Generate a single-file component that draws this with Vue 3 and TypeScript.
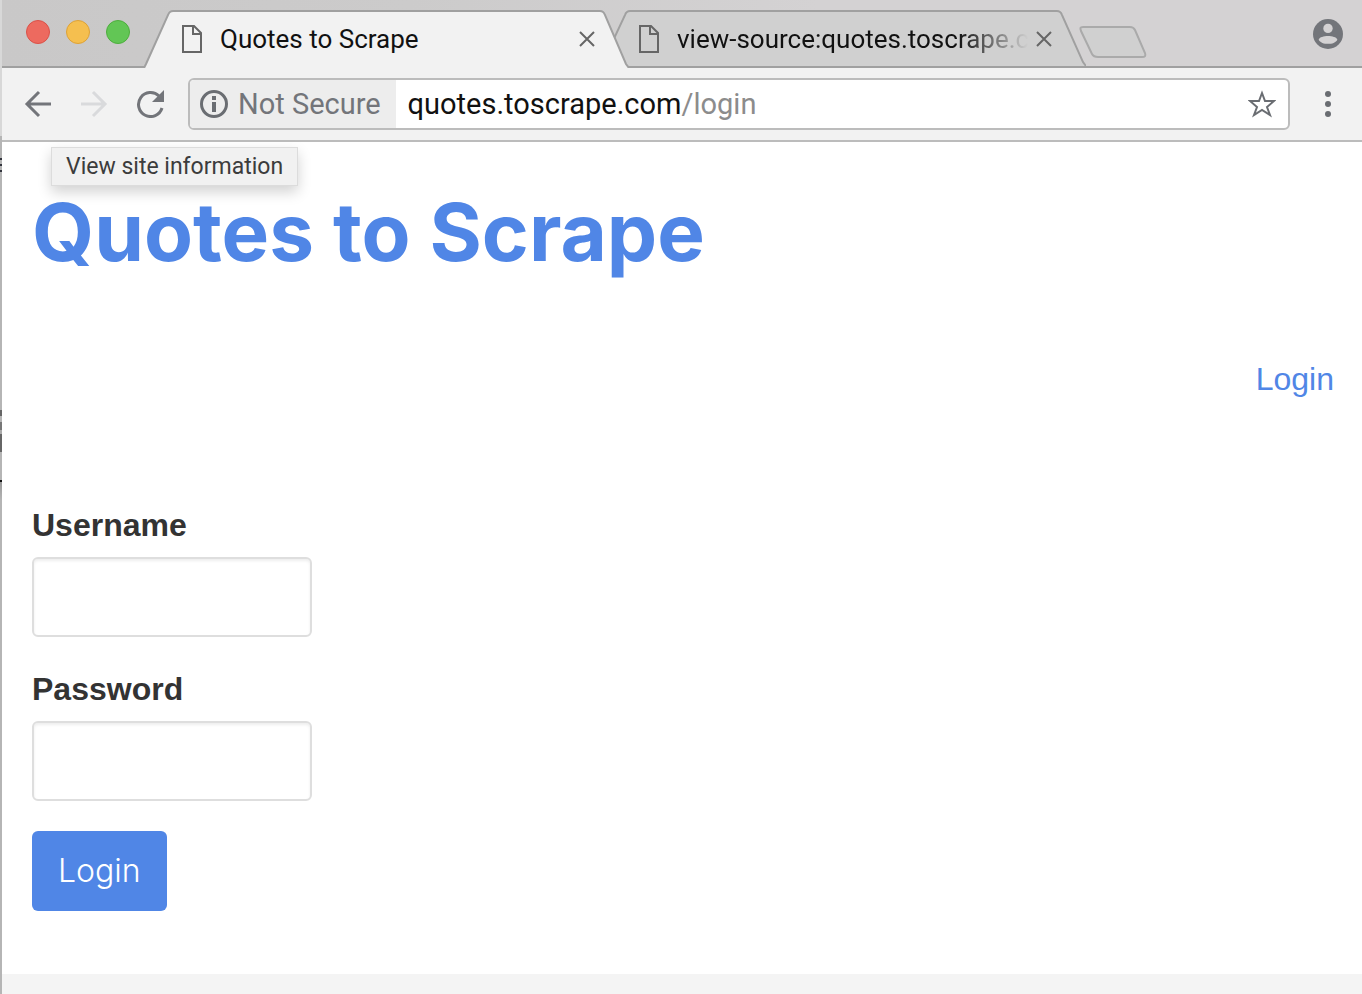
<script setup lang="ts">
import { ref } from 'vue'

interface Tab {
  title: string
  active: boolean
}

const tabs = ref<Tab[]>([
  { title: 'Quotes to Scrape', active: true },
  { title: 'view-source:quotes.toscrape.c', active: false },
])
const username = ref('')
const password = ref('')
const lights = ['red', 'yellow', 'green']
</script>

<template>
  <div class="window">
    <header class="titlebar">
      <div class="lights">
        <button v-for="c in lights" :key="c" type="button" class="light" :class="c" :aria-label="c"></button>
      </div>
      <div class="tabs">
        <div v-for="t in tabs" :key="t.title" class="tab" :class="{ active: t.active }">
          <svg class="shape" viewBox="0 0 484 58" preserveAspectRatio="none" aria-hidden="true">
            <path d="M0 58L2 54L24 5C25 2 26 1 29 1H455C458 1 459 2 460 5L481 54L484 58" />
          </svg>
          <svg class="page-icon" viewBox="0 0 20 28" aria-hidden="true">
            <path d="M1 1H12L19 8V27H1ZM11 1V9H19" />
          </svg>
          <span class="tab-title">{{ t.title }}</span>
          <button type="button" class="close" aria-label="Close tab">
            <svg viewBox="0 0 16 16"><path d="M1 1L15 15M15 1L1 15" /></svg>
          </button>
        </div>
      </div>
      <button type="button" class="new-tab" aria-label="New tab">
        <svg viewBox="0 0 68 34"><path d="M4 2H51C54 2 55 3 56 5L66 28C67 31 66 32 63 32H19C15 32 14 31 13 29L2 6C1 3 1 2 4 2Z" /></svg>
      </button>
      <button type="button" class="profile" aria-label="Profile">
        <svg viewBox="0 0 32 32">
          <circle cx="16" cy="16" r="16" fill="#73757a" />
          <circle cx="16" cy="10" r="5" fill="#d4d2d3" />
          <path d="M6 22C8 17 24 17 26 22C23 28 9 28 6 22Z" fill="#d4d2d3" />
        </svg>
      </button>
    </header>

    <nav class="toolbar">
      <button type="button" class="tool" aria-label="Back">
        <svg viewBox="0 0 28 28"><path d="M27 14H3M15 2L3 14L15 26" /></svg>
      </button>
      <button type="button" class="tool faded" aria-label="Forward">
        <svg viewBox="0 0 28 28"><path d="M1 14H25M13 2L25 14L13 26" /></svg>
      </button>
      <button type="button" class="tool" aria-label="Reload">
        <svg viewBox="0 0 28 28">
          <path d="M23 6A12 12 0 1 0 26 18" />
          <path d="M28 0V12H16Z" class="solid" />
        </svg>
      </button>
      <div class="omnibox">
        <button type="button" class="security">
          <svg viewBox="0 0 28 28">
            <circle cx="14" cy="14" r="12.5" />
            <path d="M14 12V22M14 6V10" class="bar" />
          </svg>
          Not Secure
        </button>
        <span class="url">quotes.toscrape.com<span class="path">/login</span></span>
        <button type="button" class="star" aria-label="Bookmark">
          <svg viewBox="0 0 28 28"><path d="M14 3L17 11L26 11L19 17L22 25L14 20L6 25L9 17L2 11L11 11Z" /></svg>
        </button>
      </div>
      <button type="button" class="menu" aria-label="Menu">
        <svg viewBox="0 0 8 28"><circle cx="4" cy="4" r="3" /><circle cx="4" cy="14" r="3" /><circle cx="4" cy="24" r="3" /></svg>
      </button>
      <div class="tooltip" role="tooltip">View site information</div>
    </nav>

    <main class="page">
      <h1><a href="#">Quotes to Scrape</a></h1>
      <p class="account"><a href="#">Login</a></p>
      <form @submit.prevent>
        <label for="username">Username</label>
        <input id="username" v-model="username" type="text" />
        <label for="password">Password</label>
        <input id="password" v-model="password" type="password" />
        <button type="submit" class="submit">Login</button>
      </form>
    </main>
    <footer class="footer"></footer>
  </div>
</template>

<style>
body {
  margin: 0;
  background: #fff;
}
</style>

<style scoped>
* {
  box-sizing: border-box;
}
button {
  padding: 0;
  border: 0;
  background: none;
  font: inherit;
  color: inherit;
  flex: none;
}
svg {
  display: block;
  fill: none;
}
a {
  color: #5086e6;
  text-decoration: none;
}
.window {
  position: relative;
  display: flex;
  flex-direction: column;
  min-height: 100vh;
  border-left: 2px solid #b5b5b5;
  font-family: Roboto, "Liberation Sans", sans-serif;
}
.window::before {
  content: "";
  position: absolute;
  left: -2px;
  top: 0;
  width: 2px;
  height: 500px;
  background: linear-gradient(#d8d8d8 0 136px, #b5b5b5 136px 158px, #33353d 158px 160px, #b5b5b5 160px 164px, #33353d 164px 166px, #b5b5b5 166px 170px, #33353d 170px 172px, #b5b5b5 172px 410px, #666 410px 416px, #b5b5b5 416px 422px, #777 422px 430px, #aaa 430px 434px, #666 434px 452px, #b5b5b5 452px 480px, #111 480px 482px, #999 482px, #b5b5b5 500px);
}
.titlebar {
  display: flex;
  height: 68px;
  border-bottom: 2px solid #a0a0a0;
  background: linear-gradient(90deg, #c9c8c8, #cccbcb 30%, #d4d2d3 60%);
}
.lights {
  display: flex;
  gap: 16px;
  padding: 20px 14px 0 24px;
}
.light {
  width: 24px;
  height: 24px;
  border: 1px solid #db5148;
  border-radius: 50%;
  background: #ed6a5f;
}
.light.yellow {
  border-color: #dea236;
  background: #f5bf4f;
}
.light.green {
  border-color: #4dae3d;
  background: #62c655;
}
.tabs {
  display: flex;
  flex: 0 1 942px;
  min-width: 0;
  height: 58px;
  margin-top: 10px;
}
.tab {
  position: relative;
  display: flex;
  align-items: center;
  flex: 1 1 0;
  min-width: 0;
  padding: 0 34px 0 38px;
}
.tab + .tab {
  margin-left: -28px;
}
.tab.active {
  z-index: 1;
}
.shape {
  position: absolute;
  inset: 0;
  width: 100%;
  height: 56px;
  fill: #d0d0d0;
  stroke: #a0a0a0;
  stroke-width: 2;
}
.active .shape {
  height: 58px;
  fill: #f2f2f2;
}
.page-icon {
  position: relative;
  flex: none;
  width: 20px;
  height: 28px;
  stroke: #666;
  stroke-width: 2;
}
.tab-title {
  position: relative;
  flex: 1;
  min-width: 0;
  margin-left: 18px;
  overflow: hidden;
  white-space: nowrap;
  font-size: 26px;
  line-height: 32px;
  color: #111;
}
.tab:not(.active) .tab-title {
  mask-image: linear-gradient(90deg, #000 calc(100% - 70px), transparent);
}
.close {
  position: relative;
  width: 16px;
  height: 16px;
  margin-left: 8px;
  stroke: #666;
  stroke-width: 2;
}
.new-tab {
  width: 68px;
  height: 34px;
  margin: 25px 0 0 -7px;
  stroke: #aaa;
  stroke-width: 2;
}
.new-tab path {
  fill: #d0d0d0;
}
.profile {
  width: 30px;
  height: 30px;
  margin: 19px 19px 0 auto;
}
.toolbar {
  position: relative;
  display: flex;
  align-items: center;
  gap: 28px;
  height: 74px;
  padding: 0 30px 0 22px;
  border-bottom: 2px solid #bcbcbc;
  background: #f2f2f2;
}
.tool svg {
  width: 28px;
  height: 28px;
  stroke: #73757a;
  stroke-width: 3;
}
.tool.faded svg {
  stroke: #d9dadc;
}
.tool .solid {
  fill: #73757a;
  stroke: none;
}
.omnibox {
  display: flex;
  align-items: center;
  flex: 1;
  min-width: 0;
  height: 52px;
  margin-left: -4px;
  border: 2px solid #bcbcbc;
  border-radius: 6px;
  background: #fff;
  overflow: hidden;
  font-size: 29px;
}
.security {
  display: flex;
  align-items: center;
  gap: 10px;
  height: 48px;
  padding: 0 15px 0 10px;
  background: #ededed;
  color: #73757a;
}
.security svg {
  width: 28px;
  height: 28px;
  stroke: #6a6d72;
  stroke-width: 3;
}
.security .bar {
  stroke-width: 4;
}
.url {
  flex: 1;
  min-width: 0;
  margin-left: 12px;
  white-space: nowrap;
  overflow: hidden;
  color: #111;
}
.path {
  color: #8c8c8c;
}
.star {
  margin-right: 12px;
}
.star svg {
  width: 28px;
  height: 28px;
  stroke: #6a6d72;
  stroke-width: 2;
}
.menu svg {
  width: 8px;
  height: 28px;
  fill: #6a6d72;
}
.menu {
  margin-left: 6px;
}
.tooltip {
  position: absolute;
  z-index: 2;
  left: 49px;
  top: 79px;
  padding: 0 14px;
  border: 1px solid #dcdcdc;
  background: #f1f1f1;
  box-shadow: 0 6px 14px rgba(0, 0, 0, 0.18);
  font-size: 23px;
  line-height: 37px;
  color: #3c3c3c;
  white-space: nowrap;
}
.page {
  flex: 1;
  padding: 42px 28px 60px 30px;
  font-family: "Liberation Sans", Arial, sans-serif;
  font-size: 32px;
  line-height: 44px;
  color: #333;
}
h1 {
  margin: 0;
  font-family: Inter, sans-serif;
  font-size: 80px;
  font-weight: 700;
  line-height: 96px;
}
.account {
  margin: 77px 0 102px;
  text-align: right;
}
form {
  display: flex;
  flex-direction: column;
  align-items: flex-start;
}
label {
  margin-top: 1px;
  margin-bottom: 11px;
  font-weight: 700;
  line-height: 42px;
}
input {
  width: 280px;
  height: 80px;
  margin-bottom: 30px;
  padding: 12px 24px;
  border: 2px solid #dedede;
  border-radius: 6px;
  box-shadow: inset 0 2px 3px rgba(0, 0, 0, 0.07);
  font: inherit;
}
.submit {
  height: 80px;
  padding: 0 26px;
  border-radius: 6px;
  background: #5086e6;
  color: #fff;
  font-family: Inter, sans-serif;
  font-weight: 300;
}
.footer {
  height: 20px;
  background: #f4f4f4;
}
</style>
